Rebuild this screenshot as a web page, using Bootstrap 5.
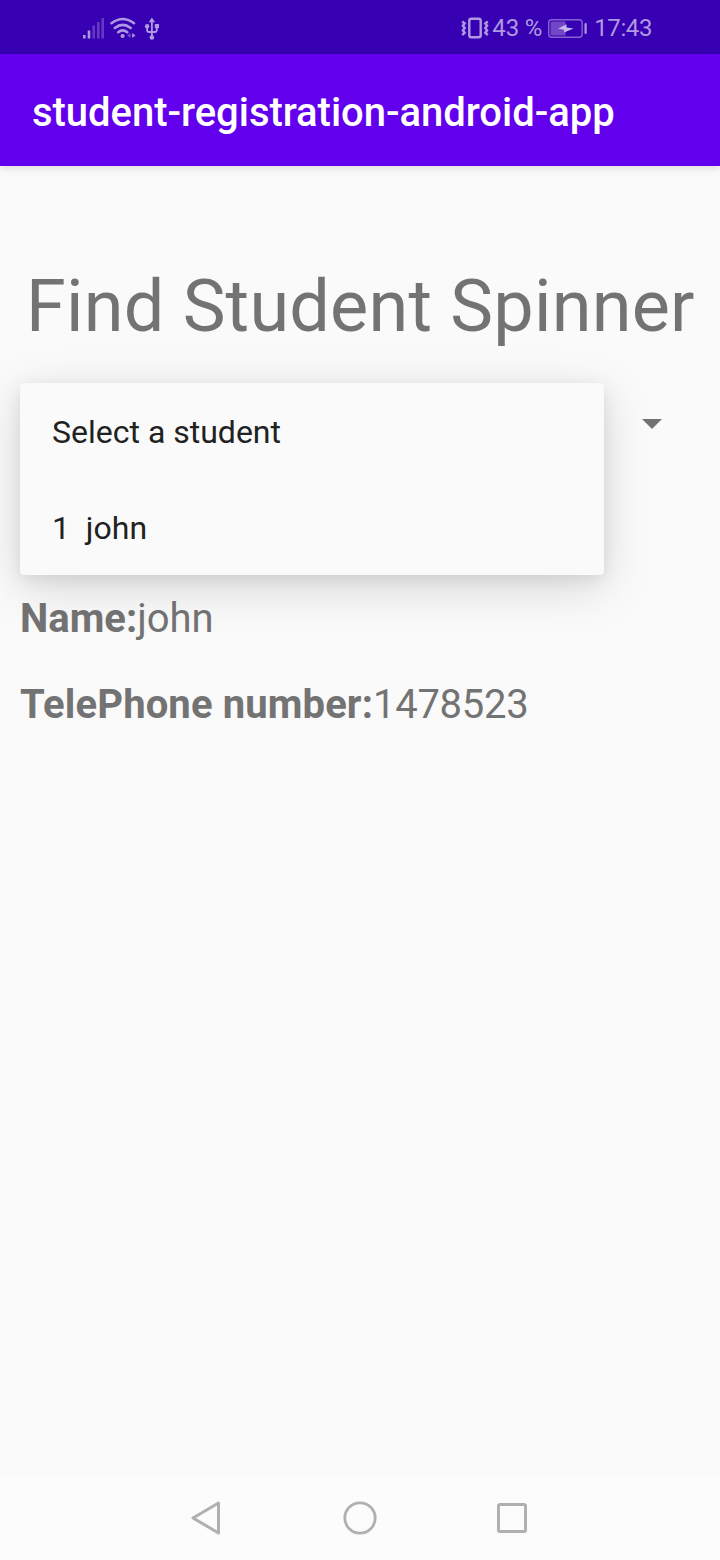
<!DOCTYPE html>
<html lang="en">
<head>
<meta charset="utf-8">
<meta name="viewport" content="width=device-width, initial-scale=1">
<title>student-registration-android-app</title>
<link href="https://cdn.jsdelivr.net/npm/bootstrap@5.3.0/dist/css/bootstrap.min.css" rel="stylesheet">
<style>
  body { font-family: Roboto, "Noto Sans", sans-serif; background: #fafafa; color: #737373; }
  svg { display: block; flex: none; }
  .status-bar { height: 54px; background: #3700b3; color: #af99e1; font-size: 24px; line-height: 54px; padding: 1px 68px 0 80px; }
  .clock { letter-spacing: -.4px; }
  .charge { letter-spacing: -.15px; }
  .app-bar { height: 112px; background: #6200ee; padding: 6px 32px 0; box-shadow: 0 2px 8px rgba(0,0,0,.12); }
  .app-title { font-size: 40px; font-weight: 500; line-height: 48px; letter-spacing: -.04px; color: #fff; white-space: nowrap; }
  .screen-title { font-size: 72px; font-weight: 400; line-height: 84px; letter-spacing: .22px; margin: 99px 0 0 26px; white-space: nowrap; }
  .spinner-row { height: 48px; margin-top: 51px; padding: 19px 58px 0 0; }
  .student-menu { display: block; top: -17px; left: 20px; width: 584px; padding: 0; border: 0; border-radius: 4px; background: #fafafa; font-size: 32px;
    box-shadow: 0 12px 48px rgba(0,0,0,.15), 0 4px 16px rgba(0,0,0,.08); }
  .student-menu .dropdown-item { height: 96px; padding: 1px 32px 0; line-height: 96px; color: #212121; white-space: pre; }
  .detail { font-size: 40px; line-height: 48px; margin-left: 20px; white-space: nowrap; }
  .student-name { margin-top: 147px; }
  .student-phone { margin-top: 38px; }
  .student-phone b { letter-spacing: .12px; }
  .student-phone span { letter-spacing: -.3px; }
  .nav-keys { height: 84px; background: #fcfcfc; padding-left: 190px; gap: 117px; }
</style>
</head>
<body class="d-flex flex-column vh-100 overflow-hidden">
  <header class="status-bar d-flex align-items-center justify-content-between">
    <div class="d-flex align-items-center">
      <svg width="28" height="26" viewBox="0 0 28 26" fill="#af99e1">
        <rect x="3" y="20" width="2.6" height="3.5"/><rect x="7.7" y="15.5" width="2.6" height="8"/>
        <g fill="#6539c4"><rect x="12.4" y="10.5" width="2.6" height="13"/><rect x="17" y="7" width="2.6" height="16.5"/><rect x="21.4" y="3" width="2.6" height="20.5"/></g>
      </svg>
      <svg width="32" height="26" viewBox="108 14 32 26" fill="none" stroke="#af99e1" stroke-width="2.5" stroke-linecap="round">
        <path d="M111.5 22.3Q122.7 13.6 134 22.3M114.8 27Q122.7 20.7 130.7 27M118.2 31.2Q122.7 27.5 127.3 31.2"/>
        <circle cx="122.6" cy="35" r="2.1" fill="#af99e1" stroke="none"/>
        <path d="M130.5 32v5l-3.3-2.5z" fill="#7650cb" stroke="none"/><path d="M132.1 32v5l3.4-2.5z" fill="#af99e1" stroke="none"/>
      </svg>
      <svg width="24" height="26" viewBox="140 14 24 26" fill="none" stroke="#af99e1" stroke-width="1.8">
        <path d="M151.9 19v17M147.1 26v3q0 2 2 2h5.7q2 0 2-2v-3"/>
        <g fill="#af99e1" stroke="none"><path d="M151.9 16.5l3.2 4.8h-6.4z"/><circle cx="147.1" cy="25.2" r="2.2"/><path d="M154.8 23h4.2v4.2h-4.2z"/><circle cx="151.9" cy="36.5" r="2.3"/></g>
      </svg>
    </div>
    <div class="d-flex align-items-center">
      <svg width="33" height="26" viewBox="460 14 33 26" fill="none" stroke="#af99e1" stroke-width="2.4">
        <rect x="470.3" y="17.7" width="11.4" height="18.6" rx="2"/>
        <path d="M463.2 20.5l2.500 2-1.800 2.300 1.800 2.300-1.800 2.300 1.800 2.300-2.500 2.300M488.800 20.500l-2.500 2 1.800 2.300-1.800 2.300 1.800 2.300-1.800 2.300 2.500 2.300"/>
      </svg>
      <span class="charge">43 %</span>
      <svg class="ms-1" width="44" height="26" viewBox="546 14 44 26">
        <rect x="548.7" y="18.7" width="33.4" height="17.6" rx="3" fill="none" stroke="#8564d1" stroke-width="1.4"/>
        <path d="M552 20.5h13.5v14H552q-1.500 0-1.500-1.500v-11q0-1.500 1.500-1.500z" fill="#7147c8"/>
        <path d="M566.500 23.300l-8.500 4.500 6.200 1-.2 2.700 9.500-4-7-1z" fill="#c9baec"/>
        <rect x="584.5" y="22" width="2.2" height="11" rx="1" fill="#af99e1"/>
      </svg>
      <span class="clock ms-1">17:43</span>
    </div>
  </header>

  <nav class="app-bar navbar flex-shrink-0"><span class="app-title">student-registration-android-app</span></nav>

  <main class="flex-grow-1">
    <h1 class="screen-title">Find Student Spinner</h1>
    <div class="spinner-row dropdown d-flex align-items-start justify-content-end">
      <svg width="20" height="10" viewBox="0 0 20 10"><path d="M0 0h20L10 10z" fill="#737373"/></svg>
      <div class="dropdown-menu student-menu show">
        <a class="dropdown-item">Select a student</a>
        <a class="dropdown-item">1  john</a>
      </div>
    </div>
    <div class="detail student-name position-relative"><b>Name:</b>john</div>
    <div class="detail student-phone position-relative"><b>TelePhone number:</b><span>1478523</span></div>
  </main>

  <footer class="nav-keys d-flex align-items-center flex-shrink-0">
    <svg width="35" height="36" viewBox="190 1500 35 36" fill="none" stroke="#b0b0b0" stroke-width="3" stroke-linejoin="round"><path d="M193 1518l25.500-15v30z"/></svg>
    <svg width="36" height="36" viewBox="342 1500 36 36" fill="none" stroke="#b0b0b0" stroke-width="2.8"><circle cx="360" cy="1518" r="15.2"/></svg>
    <svg width="34" height="36" viewBox="495 1500 34 36" fill="none" stroke="#b0b0b0" stroke-width="3"><rect x="498.5" y="1504.5" width="27" height="27" rx="1.5"/></svg>
  </footer>
  <script src="https://cdn.jsdelivr.net/npm/bootstrap@5.3.0/dist/js/bootstrap.bundle.min.js"></script>
</body>
</html>
